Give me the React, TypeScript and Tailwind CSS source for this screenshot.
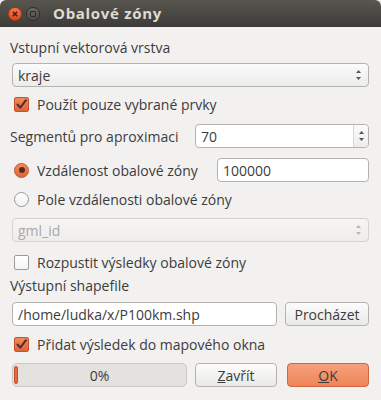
import React from "react";

const font = { fontFamily: "'Open Sans', 'DejaVu Sans', sans-serif" };

function Arrows({ disabled = false }: { disabled?: boolean }) {
  const c = disabled ? "#b8b8b8" : "#555";
  return (
    <svg width="7" height="12" viewBox="0 0 7 12">
      <path d="M3.5 1 L6 4 L1 4 Z" fill={c} />
      <path d="M3.5 11 L6 8 L1 8 Z" fill={c} />
    </svg>
  );
}

function CheckBox({ checked }: { checked: boolean }) {
  if (checked)
    return (
      <div className="w-[15px] h-[15px] shrink-0 rounded-[2px] border border-[#c5532a] bg-gradient-to-b from-[#f08a5c] to-[#e0643a] flex items-center justify-center">
        <svg width="13" height="13" viewBox="0 0 13 13">
          <path d="M2.5 6.5 L5.3 9.6 L11 2.2" stroke="#4a3128" strokeWidth="2" fill="none" strokeLinecap="round" strokeLinejoin="round" />
        </svg>
      </div>
    );
  return <div className="w-[15px] h-[15px] shrink-0 rounded-[2px] border border-[#9a9a9a] bg-gradient-to-b from-white to-[#f4f4f4]" />;
}

function Radio({ checked }: { checked: boolean }) {
  if (checked)
    return (
      <div className="w-[15px] h-[15px] shrink-0 rounded-full border border-[#c5532a] bg-gradient-to-b from-[#f08a5c] to-[#e0643a] flex items-center justify-center">
        <div className="w-[6px] h-[6px] rounded-full bg-[#5a2a18]" />
      </div>
    );
  return <div className="w-[15px] h-[15px] shrink-0 rounded-full border border-[#9a9a9a] bg-gradient-to-b from-white to-[#f2f2f2]" />;
}

export default function App() {
  return (
    <div className="w-[381px] h-[400px] bg-[#f2f1f0] text-[14px] text-[#3c3c3c] overflow-hidden" style={font}>
      {/* title bar */}
      <div className="h-[27px] rounded-t-[6px] bg-gradient-to-b from-[#595650] to-[#3c3b37] flex items-center pl-[8px]">
        <div className="w-[14px] h-[14px] rounded-full bg-gradient-to-b from-[#f7784a] to-[#dd4814] border border-[#a8391a] flex items-center justify-center">
          <svg width="6" height="6" viewBox="0 0 6 6">
            <path d="M0.8 0.8 L5.2 5.2 M5.2 0.8 L0.8 5.2" stroke="#3a1a0e" strokeWidth="1.3" />
          </svg>
        </div>
        <div className="ml-[4px] w-[14px] h-[14px] rounded-full bg-gradient-to-b from-[#6b6963] to-[#4e4c47] border border-[#2f2e2b] flex items-center justify-center">
          <div className="w-[6px] h-[6px] border border-[#2a2926] rounded-[1px]" />
        </div>
        <div className="ml-[13px] text-[15px] font-bold tracking-[0.7px] text-[#dfdbd2]">Obalové zóny</div>
      </div>

      <div className="flex flex-col px-[10px]">
        <div className="h-[20px] mt-[10px] flex items-center">Vstupní vektorová vrstva</div>

        <div className="h-[24px] mt-[6px] mx-[2px] rounded-[4px] border border-[#b5b3ae] bg-gradient-to-b from-[#fbfbfb] to-[#ececec] flex items-center pl-[5px] pr-[6px]">
          <span className="flex-1">kraje</span>
          <Arrows />
        </div>

        <div className="h-[20px] mt-[7px] flex items-center pl-[4px] gap-[8px]">
          <CheckBox checked />
          <span>Použít pouze vybrané prvky</span>
        </div>

        <div className="h-[24px] mt-[10px] flex items-center">
          <span className="flex-1">Segmentů pro aproximaci</span>
          <div className="w-[174px] h-[24px] mr-[2px] rounded-[4px] border border-[#b5b3ae] bg-white flex">
            <span className="flex-1 flex items-center pl-[5px]">70</span>
            <div className="w-[15px] border-l border-[#d8d8d8] bg-gradient-to-b from-[#fbfbfb] to-[#ececec] rounded-r-[4px] flex items-center justify-center">
              <Arrows />
            </div>
          </div>
        </div>

        <div className="h-[24px] mt-[10px] flex items-center">
          <div className="flex-1 flex items-center pl-[4px] gap-[8px]">
            <Radio checked />
            <span>Vzdálenost obalové zóny</span>
          </div>
          <div className="w-[152px] h-[24px] mr-[2px] rounded-[4px] border border-[#b5b3ae] bg-white flex items-center pl-[5px]">100000</div>
        </div>

        <div className="h-[20px] mt-[7px] flex items-center pl-[4px] gap-[8px]">
          <Radio checked={false} />
          <span>Pole vzdálenosti obalové zóny</span>
        </div>

        <div className="h-[24px] mt-[9px] mx-[2px] rounded-[4px] border border-[#d4d2cd] bg-gradient-to-b from-[#f6f5f4] to-[#eeedec] flex items-center pl-[5px] pr-[6px] text-[#a9a9a9]">
          <span className="flex-1">gml_id</span>
          <Arrows disabled />
        </div>

        <div className="h-[20px] mt-[10px] flex items-center pl-[4px] gap-[8px]">
          <CheckBox checked={false} />
          <span>Rozpustit výsledky obalové zóny</span>
        </div>

        <div className="h-[20px] mt-[3px] flex items-center">Výstupní shapefile</div>

        <div className="h-[24px] mt-[7px] flex items-center px-[2px] gap-[8px]">
          <div className="flex-1 h-[24px] rounded-[4px] border border-[#b5b3ae] bg-white flex items-center pl-[5px]">/home/ludka/x/P100km.shp</div>
          <div className="w-[84px] h-[24px] rounded-[4px] border border-[#b5b3ae] bg-gradient-to-b from-[#fcfcfc] to-[#e9e9e7] flex items-center justify-center">Procházet</div>
        </div>

        <div className="h-[20px] mt-[8px] flex items-center pl-[4px] gap-[8px]">
          <CheckBox checked />
          <span>Přidat výsledek do mapového okna</span>
        </div>

        <div className="h-[24px] mt-[9px] flex items-center px-[2px]">
          <div className="w-[175px] h-[24px] rounded-[5px] border border-[#c9c7c2] bg-[#e3e2df] relative flex items-center justify-center">
            <div className="absolute left-[1px] top-[2px] bottom-[2px] w-[4px] rounded-[2px] bg-[#e8693c] border border-[#c5532a]" />
            <span>0%</span>
          </div>
          <div className="ml-[8px] w-[82px] h-[24px] rounded-[4px] border border-[#b5b3ae] bg-gradient-to-b from-[#fcfcfc] to-[#e9e9e7] flex items-center justify-center">
            <span><span className="underline">Z</span>avřít</span>
          </div>
          <div className="ml-[10px] w-[82px] h-[24px] rounded-[4px] border border-[#d0663e] bg-gradient-to-b from-[#f6a07c] to-[#ef8459] flex items-center justify-center">
            <span><span className="underline">O</span>K</span>
          </div>
        </div>
      </div>
    </div>
  );
}
